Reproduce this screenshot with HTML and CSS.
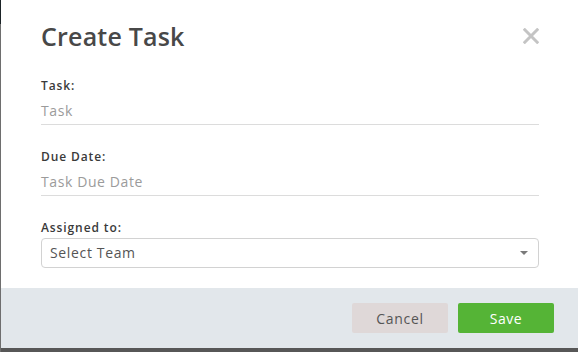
FILE: index.html
```html
<!DOCTYPE html>
<html lang="en">
<head>
<meta charset="utf-8">
<title>Create Task</title>
<link rel="stylesheet" href="styles.css">
</head>
<body>
<div class="modal">
  <div class="modal-header">
    <h2 class="modal-title">Create Task</h2>
    <button class="close" type="button" aria-label="Close">
      <svg width="16" height="16" viewBox="0 0 16 16"><path d="M1.8 1.8 L14.2 14.2 M14.2 1.8 L1.8 14.2" stroke="#c4c4c4" stroke-width="3" stroke-linecap="square"/></svg>
    </button>
  </div>
  <form class="modal-body">
    <div class="field">
      <label class="label">Task:</label>
      <div class="input placeholder">Task</div>
    </div>
    <div class="field">
      <label class="label">Due Date:</label>
      <div class="input placeholder">Task Due Date</div>
    </div>
    <div class="field last">
      <label class="label">Assigned to:</label>
      <div class="select">
        <span>Select Team</span>
        <svg width="8" height="4" viewBox="0 0 8 4"><path d="M0 0 H8 L4 4 Z" fill="#7a7a7a"/></svg>
      </div>
    </div>
  </form>
  <div class="modal-footer">
    <button class="btn btn-cancel" type="button">Cancel</button>
    <button class="btn btn-save" type="button">Save</button>
  </div>
</div>
</body>
</html>
```

FILE: styles.css
```css
html, body {
  margin: 0;
  padding: 0;
  height: 352px;
  overflow: hidden;
}
body {
  background: linear-gradient(to bottom, #1b2327 0, #1b2327 24px, #6e6e6e 24px, #6e6e6e 100%);
  font-family: "Open Sans", "Liberation Sans", sans-serif;
}
.modal {
  margin-left: 1px;
  width: 577px;
  height: 348px;
  background: #ffffff;
  display: flex;
  flex-direction: column;
  border-bottom: 4px solid #575757;
}
.modal-header {
  display: flex;
  justify-content: space-between;
  align-items: center;
  padding: 20px 39px 0 40px;
}
.modal-title {
  margin: 0;
  font-size: 25px;
  line-height: 32px;
  font-weight: 600;
  color: #484848;
  letter-spacing: 0.2px;
}
.close {
  border: 0;
  background: none;
  padding: 0;
  width: 16px;
  height: 16px;
  display: flex;
}
.modal-body {
  padding: 26px 39px 0 40px;
  display: flex;
  flex-direction: column;
}
.field {
  display: flex;
  flex-direction: column;
  margin-bottom: 24px;
}
.field.last {
  margin-bottom: 0;
}
.label {
  font-size: 12px;
  line-height: 16px;
  font-weight: 600;
  color: #3a3a3a;
  letter-spacing: 0.9px;
}
.input {
  height: 27px;
  padding-top: 3px;
  line-height: 27px;
  font-size: 14px;
  letter-spacing: 0.6px;
  border-bottom: 1px solid #dcdcdc;
}
.placeholder {
  color: #9b9b9b;
}
.select {
  margin-top: 2px;
  height: 28px;
  border: 1px solid #d2d2d2;
  border-radius: 4px;
  display: flex;
  align-items: center;
  justify-content: space-between;
  padding: 0 10px 0 8px;
  font-size: 14px;
  line-height: 28px;
  letter-spacing: 0.65px;
  color: #555555;
}
.modal-footer {
  margin-top: auto;
  height: 60px;
  background: #e2e7eb;
  display: flex;
  align-items: center;
  justify-content: flex-end;
  gap: 10px;
  padding-right: 24px;
}
.btn {
  width: 96px;
  height: 30px;
  border: 0;
  border-radius: 2px;
  font-family: "Open Sans", "Liberation Sans", sans-serif;
  font-size: 14px;
  cursor: pointer;
}
.btn-cancel {
  background: #dfd8d8;
  color: #555555;
  letter-spacing: 0.7px;
}
.btn-save {
  background: #55b436;
  color: #ffffff;
  letter-spacing: 0.5px;
}
```
